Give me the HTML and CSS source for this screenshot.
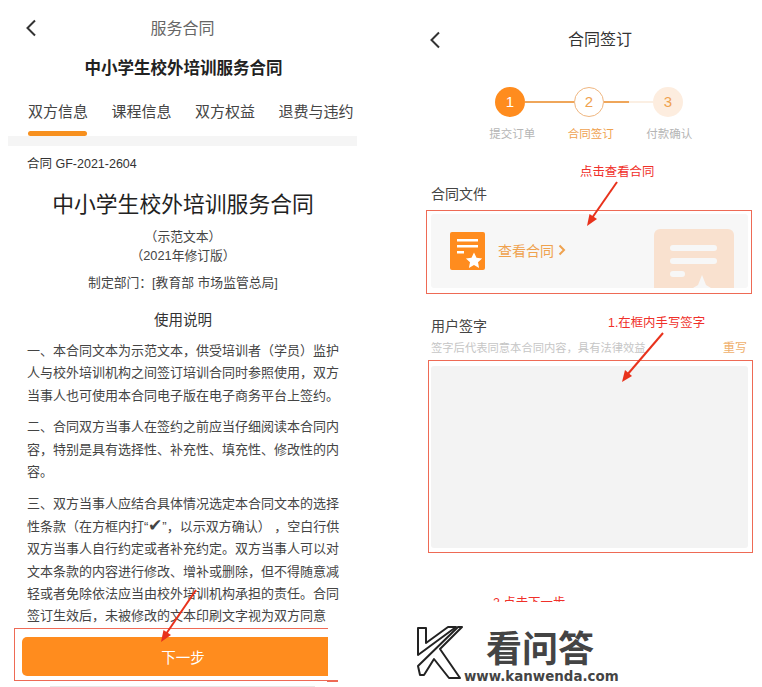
FILE: index.html
```html
<!DOCTYPE html>
<html lang="zh-CN">

<head>
    <title>服务合同</title>
    <link rel="stylesheet" href="styles.css">
</head>

<body>
    <div class="page">
        <!-- Left screen: contract text -->
        <div class="left-screen">
            <div class="top-title">
                <svg class="back" width="12" height="18" viewBox="0 0 12 18"><path d="M10 1.5 2.5 9l7.5 7.5"/></svg>
                服务合同
            </div>
            <div class="contract-name">中小学生校外培训服务合同</div>
            <ul class="tabs">
                <li class="active">双方信息</li>
                <li>课程信息</li>
                <li>双方权益</li>
                <li>退费与违约</li>
            </ul>
            <div class="tab-band"></div>
            <div class="doc">
                <div class="doc-no">合同 GF-2021-2604</div>
                <h1>中小学生校外培训服务合同</h1>
                <div class="doc-sub">（示范文本）</div>
                <div class="doc-sub">（2021年修订版）</div>
                <div class="doc-dept">制定部门：[教育部 市场监管总局]</div>
                <h2>使用说明</h2>
                <p>一、本合同文本为示范文本，供受培训者（学员）监护<br>人与校外培训机构之间签订培训合同时参照使用，双方<br>当事人也可使用本合同电子版在电子商务平台上签约。</p>
                <p>二、合同双方当事人在签约之前应当仔细阅读本合同内<br>容，特别是具有选择性、补充性、填充性、修改性的内<br>容。</p>
                <p>三、双方当事人应结合具体情况选定本合同文本的选择<br>性条款（在方框内打“<span class="check">✔</span>”，以示双方确认） ，空白行供<br>双方当事人自行约定或者补充约定。双方当事人可以对<br>文本条款的内容进行修改、增补或删除，但不得随意减<br>轻或者免除依法应当由校外培训机构承担的责任。合同<br>签订生效后，未被修改的文本印刷文字视为双方同意</p>
            </div>
            <button class="next-btn">下一步</button>
            <div class="home-line"></div>
        </div>

        <!-- Right screen: signing -->
        <div class="right-screen">
            <div class="sign-title">
                <svg class="back" width="12" height="18" viewBox="0 0 12 18"><path d="M10 1.5 2.5 9l7.5 7.5"/></svg>
                合同签订
            </div>
            <div class="steps">
                <span class="circle done">1</span>
                <span class="step-line"></span>
                <span class="circle current">2</span>
                <span class="step-line fade"></span>
                <span class="circle todo">3</span>
            </div>
            <div class="step-labels">
                <span>提交订单</span>
                <span class="current-label">合同签订</span>
                <span>付款确认</span>
            </div>

            <div class="section-title file-title">合同文件</div>
            <div class="file-card">
                <svg class="file-icon" width="35" height="38" viewBox="0 0 35 38">
                    <rect width="35" height="38" rx="2" fill="#ff8c1e"/>
                    <rect x="7" y="7" width="21" height="2.5" fill="#fff"/>
                    <rect x="7" y="13" width="21" height="2.5" fill="#fff"/>
                    <rect x="7" y="19" width="7" height="2.5" fill="#fff"/>
                    <path d="M24 20.5l2.500 5.200 5.600.7-4.100 3.900 1.100 5.600-5.100-2.800-5.100 2.800 1.100-5.600-4.100-3.900 5.600-.7z" fill="#fff"/>
                </svg>
                <span class="file-link">查看合同 <svg width="8" height="12" viewBox="0 0 8 12"><path d="M1.500 1.500 6 6l-4.500 4.500"/></svg></span>
                <svg class="file-mark" width="80" height="59" viewBox="0 0 80 59">
                    <path d="M6 0h68a6 6 0 0 1 6 6v53H0V6a6 6 0 0 1 6-6z" fill="#f9e1cf"/>
                    <rect x="16" y="16" width="47" height="6" rx="3" fill="#f7f7f7"/>
                    <rect x="16" y="29" width="47" height="6" rx="3" fill="#f7f7f7"/>
                    <rect x="16" y="42" width="15" height="6" rx="3" fill="#f7f7f7"/>
                    <path d="M39 59l5-3 4-10 4 10 5 3z" fill="#f7f7f7"/>
                </svg>
            </div>

            <div class="section-title user-title">用户签字</div>
            <div class="hint-row">
                <span class="hint">签字后代表同意本合同内容，具有法律效益</span>
                <span class="rewrite">重写</span>
            </div>
            <div class="sign-pad"></div>
        </div>
    </div>

    <!-- Red annotations on top of the screenshots -->
    <div class="mark-frame frame-next"></div>
    <div class="mark-frame frame-file"></div>
    <div class="mark-frame frame-sign"></div>
    <div class="mark-text text-file">点击查看合同</div>
    <div class="mark-text text-sign">1.在框内手写签字</div>
    <div class="mark-text text-next">2.点击下一步</div>
    <svg class="mark-arrows" width="762" height="687" viewBox="0 0 762 687">
        <path d="M196 590 166 634" class="shaft"/>
        <path d="M161 642l2.500-12 7.500 5z" class="head"/>
        <path d="M617 182 592 218" class="shaft"/>
        <path d="M587 226l2.500-12 7.500 5z" class="head"/>
        <path d="M663 333 627 375" class="shaft"/>
        <path d="M622 382l3-12 7 6z" class="head"/>
    </svg>

    <!-- Site watermark -->
    <div class="watermark">
        <svg class="wm-logo" width="50" height="60" viewBox="0 0 50 60">
            <path d="M4 3h8v15L34 2h8L4 30z"/>
            <path d="M44 2h4L26 24l20 29H35L20 34 10 50H6L4 41z"/>
        </svg>
        <div class="wm-name">看问答</div>
        <div class="wm-url">www.kanwenda.com</div>
    </div>
</body>

</html>
```

FILE: styles.css
```css
* {
    box-sizing: border-box;
}

body {
    font-family: "Liberation Sans", "Noto Sans CJK SC", sans-serif;
    background-color: #fff;
    color: #333;
    margin: 0;
    padding: 0;
    width: 762px;
    height: 687px;
    overflow: hidden;
    position: relative;
}

.page {
    display: flex;
    height: 687px;
}

.back {
    position: absolute;
    top: 50%;
    margin-top: -9px;
    fill: none;
    stroke: #333;
    stroke-width: 2;
}

/* Left screen */
.left-screen {
    width: 349px;
    margin-left: 8px;
    flex-shrink: 0;
}

.top-title {
    position: relative;
    height: 56px;
    line-height: 58px;
    text-align: center;
    font-size: 16px;
    color: #666;
}

.top-title .back {
    left: 17px;
}

.contract-name {
    height: 24px;
    line-height: 24px;
    padding-left: 2px;
    text-align: center;
    font-size: 16.500px;
    font-weight: bold;
    color: #222;
}

.tabs {
    list-style-type: none;
    margin: 0;
    padding: 20px 0 0 20px;
    display: flex;
    gap: 23.500px;
    height: 56px;
}

.tabs li {
    position: relative;
    font-size: 15px;
    line-height: 24px;
    white-space: nowrap;
    color: #444;
}

.tabs li.active::after {
    content: "";
    position: absolute;
    left: 0;
    right: 1px;
    top: 31px;
    height: 5px;
    background-color: #f7901e;
    border-radius: 3px;
}

.tab-band {
    height: 10px;
    background-color: #f5f5f5;
}

.doc {
    padding: 8px 0 0 19px;
    height: 479px;
}

.doc-no {
    font-size: 12.500px;
    line-height: 20px;
}

.doc h1 {
    width: 312px;
    margin: 15px 0 6px;
    font-size: 21.800px;
    font-weight: normal;
    line-height: 32px;
    text-align: center;
    color: #222;
}

.doc-sub,
.doc-dept {
    width: 312px;
    font-size: 12.800px;
    line-height: 19px;
    text-align: center;
    white-space: nowrap;
    color: #444;
}

.doc-dept {
    margin-top: 8px;
}

.doc h2 {
    width: 312px;
    margin: 17px 0 9px;
    font-size: 14.500px;
    font-weight: normal;
    line-height: 22px;
    text-align: center;
    color: #333;
}

.doc p {
    margin: 0 0 9.500px;
    font-size: 13px;
    line-height: 22.300px;
    white-space: nowrap;
    color: #444;
}

.check {
    font-size: 17px;
}

.next-btn {
    display: block;
    width: 306px;
    height: 39px;
    margin: 12px 0 0 14px;
    background-color: #ff8c1e;
    color: #fff;
    border: none;
    border-radius: 5px 0 0 5px;
    font-family: inherit;
    font-size: 14.500px;
    padding: 0 0 0 16px;
}

.home-line {
    width: 265px;
    height: 1px;
    margin: 10px 0 0 42px;
    background-color: #e8e8e8;
}

/* Right screen */
.right-screen {
    margin-left: 62px;
    width: 343px;
    padding-left: 12px;
}

.sign-title {
    position: relative;
    height: 80px;
    line-height: 80px;
    text-align: center;
    font-size: 16px;
    color: #333;
    width: 338px;
}

.sign-title .back {
    left: -2px;
}

.steps {
    display: flex;
    align-items: center;
    margin: 7px 0 0 64px;
}

.circle {
    width: 30px;
    height: 30px;
    border-radius: 50%;
    flex-shrink: 0;
    text-align: center;
    font-size: 15px;
    line-height: 30px;
}

.circle.done {
    background-color: #ff8c1e;
    color: #fff;
}

.circle.current {
    border: 1px solid #efb680;
    color: #efa24f;
    line-height: 28px;
}

.circle.todo {
    background-color: #fdeddf;
    color: #efa24f;
}

.step-line {
    width: 49px;
    height: 1.500px;
    background-color: #efa65a;
}

.step-line.fade {
    background: linear-gradient(to right, #efa65a 50%, #fbefe3 50%);
}

.step-labels {
    display: flex;
    margin: 8px 0 0 42px;
}

.step-labels span {
    width: 78.500px;
    text-align: center;
    font-size: 11.500px;
    line-height: 18px;
    color: #b5b5b5;
}

.step-labels .current-label {
    color: #efa24f;
}

.section-title {
    font-size: 14px;
    line-height: 20px;
    color: #444;
}

.file-title {
    margin-top: 41px;
}

.file-card {
    display: flex;
    align-items: center;
    width: 317px;
    height: 74px;
    margin-top: 10px;
    padding-left: 19px;
    background-color: #f7f7f7;
    border-radius: 3px;
}

.file-link {
    margin: -2px 0 0 13px;
    font-size: 14px;
    color: #efa24f;
    white-space: nowrap;
}

.file-link svg {
    fill: none;
    stroke: #efa24f;
    stroke-width: 2;
}

.file-mark {
    margin-left: auto;
    margin-right: 14px;
    align-self: flex-end;
}

.user-title {
    margin-top: 28px;
}

.hint-row {
    display: flex;
    justify-content: space-between;
    align-items: center;
    width: 316px;
    height: 19px;
    margin-top: 1px;
}

.hint {
    font-size: 11.300px;
    color: #c6c6c6;
    white-space: nowrap;
}

.rewrite {
    font-size: 12px;
    color: #efb06c;
}

.sign-pad {
    width: 317px;
    height: 182px;
    margin-top: 10px;
    background-color: #f3f3f3;
    border-radius: 3px;
}

/* Annotations */
.mark-frame {
    position: absolute;
    border: 1.500px solid #ee6a55;
}

.frame-next {
    left: 14px;
    top: 628px;
    width: 314px;
    height: 53px;
    border-right: none;
}

.frame-next::after {
    content: "";
    position: absolute;
    left: 312px;
    bottom: -1.500px;
    width: 11px;
    height: 1.500px;
    background-color: #ee6a55;
}

.frame-file {
    left: 426px;
    top: 210px;
    width: 326px;
    height: 84px;
}

.frame-sign {
    left: 428px;
    top: 360px;
    width: 325px;
    height: 193px;
}

.mark-text {
    position: absolute;
    font-size: 12.400px;
    line-height: 16px;
    color: #f0302a;
    white-space: nowrap;
}

.text-file {
    left: 580px;
    top: 164px;
}

.text-sign {
    left: 608px;
    top: 315px;
}

.text-next {
    left: 493px;
    top: 595px;
}

.mark-arrows {
    position: absolute;
    left: 0;
    top: 0;
}

.shaft {
    fill: none;
    stroke: #e8321c;
    stroke-width: 2;
}

.head {
    fill: #e8321c;
}

/* Watermark */
.watermark {
    position: absolute;
    left: 400px;
    top: 602px;
    width: 362px;
    height: 85px;
    background-color: #fff;
}

.wm-logo {
    position: absolute;
    left: 14px;
    top: 23px;
}

.wm-logo path {
    fill: #fff;
    stroke: #222;
    stroke-width: 2;
    stroke-linejoin: round;
}

.wm-name {
    position: absolute;
    left: 86px;
    top: 25px;
    font-size: 36px;
    line-height: 46px;
    font-weight: bold;
    color: #444;
    white-space: nowrap;
}

.wm-url {
    position: absolute;
    left: 64px;
    top: 66px;
    font-family: "DejaVu Sans", sans-serif;
    font-size: 13.400px;
    line-height: 18px;
    font-weight: bold;
    color: #444;
    white-space: nowrap;
}
```
